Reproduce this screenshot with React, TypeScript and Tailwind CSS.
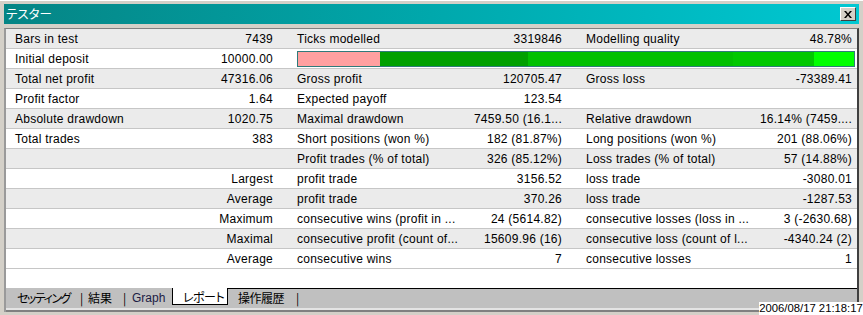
const rows: string[][] = [
  ["Bars in test", "7439", "Ticks modelled", "3319846", "Modelling quality", "48.78%"],
  ["Initial deposit", "10000.00"],
  ["Total net profit", "47316.06", "Gross profit", "120705.47", "Gross loss", "-73389.41"],
  ["Profit factor", "1.64", "Expected payoff", "123.54", "", ""],
  ["Absolute drawdown", "1020.75", "Maximal drawdown", "7459.50 (16.1...", "Relative drawdown", "16.14% (7459...."],
  ["Total trades", "383", "Short positions (won %)", "182 (81.87%)", "Long positions (won %)", "201 (88.06%)"],
  ["", "", "Profit trades (% of total)", "326 (85.12%)", "Loss trades (% of total)", "57 (14.88%)"],
  ["", "Largest", "profit trade", "3156.52", "loss trade", "-3080.01"],
  ["", "Average", "profit trade", "370.26", "loss trade", "-1287.53"],
  ["", "Maximum", "consecutive wins (profit in ...", "24 (5614.82)", "consecutive losses (loss in ...", "3 (-2630.68)"],
  ["", "Maximal", "consecutive profit (count of...", "15609.96 (16)", "consecutive loss (count of l...", "-4340.24 (2)"],
  ["", "Average", "consecutive wins", "7", "consecutive losses", "1"],
];

const QualityBar = () => (
  <div className="col-span-4 flex items-center pl-[14px] pr-[2px]">
    <div className="flex h-[16px] w-full border border-[#2f7a7a]">
      <div className="w-[82px] bg-[#ffa0a0]" />
      <div className="w-[148px] bg-[#00a000]" />
      <div className="w-[205px] bg-[#00c000]" />
      <div className="w-[81px] bg-[#00c800]" />
      <div className="flex-1 bg-[#00ff00]" />
    </div>
  </div>
);

const Row = ({ cells, index }: { cells: string[]; index: number }) => {
  const bg = index % 2 === 0 ? "bg-[#ebebeb]" : "bg-white";
  return (
    <div
      className={`grid h-[20px] grid-cols-[134px_143px_184px_105px_185px_100px] border-b border-[#c6c6c6] ${bg}`}
    >
      <div className="flex items-center whitespace-nowrap pl-[9px]">{cells[0]}</div>
      <div className="flex items-center justify-end whitespace-nowrap pr-[10px]">{cells[1]}</div>
      {cells.length === 2 ? (
        <QualityBar />
      ) : (
        <>
          <div className="flex items-center whitespace-nowrap pl-[14px]">{cells[2]}</div>
          <div className="flex items-center justify-end whitespace-nowrap pr-[10px]">{cells[3]}</div>
          <div className="flex items-center whitespace-nowrap pl-[14px]">{cells[4]}</div>
          <div className="flex items-center justify-end whitespace-nowrap pr-[5px]">{cells[5]}</div>
        </>
      )}
    </div>
  );
};

const jp = "font-['Noto_Sans_CJK_JP',sans-serif] [font-feature-settings:'palt']";

export default function App() {
  return (
    <div className="relative h-[315px] w-[863px] overflow-hidden border-t border-white bg-[#d4d0c8] font-['Liberation_Sans',Arial,sans-serif] text-[12px] text-black">
      {/* title bar */}
      <div className="mx-[4px] mt-[3px] flex h-[20px] items-center justify-between bg-gradient-to-r from-[#058585] via-[#00a8ac] to-[#00c8d2] pl-[2px] pr-[3px]">
        <span className={`text-[12.5px] leading-none text-white ${jp}`}>テスター</span>
        <div className="flex h-[14px] w-[16px] items-center justify-center border border-t-white border-l-white border-r-[#404040] border-b-[#404040] bg-[#d4d0c8]">
          <svg width="8" height="7" viewBox="0 0 8 7">
            <path d="M0 0h2l2 2.5L6 0h2L5 3.5 8 7H6L4 4.5 2 7H0l3-3.5z" fill="#000" />
          </svg>
        </div>
      </div>

      {/* client area */}
      <div className="mx-[4px] mt-[4px] flex h-[284px] flex-col border-l-2 border-r-2 border-t border-l-[#9a9a9a] border-r-[#404040] border-t-[#808080]">
        <div className="flex-1 bg-white tracking-[0.25px]">
          {rows.map((r, i) => (
            <Row key={i} cells={r} index={i} />
          ))}
        </div>

        {/* tabs */}
        <div className={`flex h-[20px] items-start bg-[#c0c0c0] text-[12px] leading-[18px] ${jp}`}>
          <span className="w-[11px] shrink-0" />
          <span className="w-[63px] shrink-0 whitespace-nowrap pt-[1px] tracking-[-1.5px]">セッティング</span>
          <span className="w-[8px] shrink-0 pt-[1px]">|</span>
          <span className="w-[35px] shrink-0 pt-[1px]">結果</span>
          <span className="w-[9px] shrink-0 pt-[1px]">|</span>
          <span className="w-[40px] shrink-0 pt-[1px] font-['Liberation_Sans',Arial,sans-serif] text-[#1c1c44]">Graph</span>
          <span className="h-[17px] w-[56px] shrink-0 whitespace-nowrap border-x border-b border-black bg-white pl-[10px] leading-[17px] tracking-[-0.5px]">
            レポート
          </span>
          <div className="flex h-[17px] flex-1 border-t border-black">
            <span className="ml-[10px] w-[58px] whitespace-nowrap tracking-[-0.5px]">操作履歴</span>
            <span>|</span>
          </div>
        </div>
        <div className="h-[2px] bg-[#e4e4e4]" />
        <div className="h-[2px] bg-[#808080]" />
      </div>

      {/* status time */}
      <div className="absolute bottom-0 right-0 flex h-[13px] w-[104px] items-center justify-center bg-white text-[11.3px] leading-none">
        2006/08/17 21:18:17
      </div>
    </div>
  );
}
